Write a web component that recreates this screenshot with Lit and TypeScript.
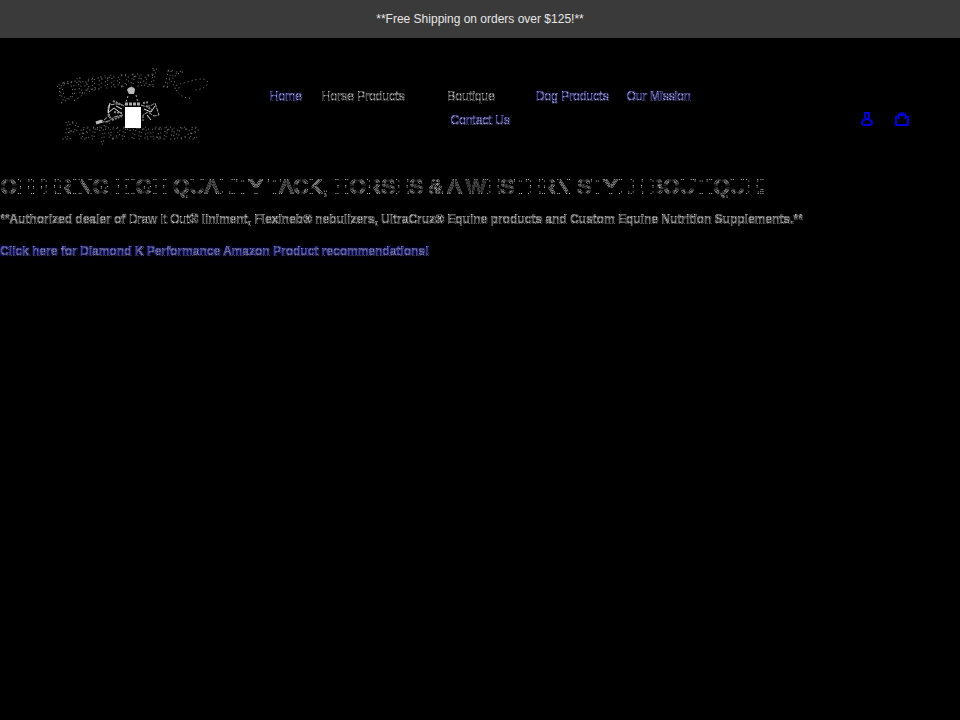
import { LitElement, html, css } from "lit";
import { customElement } from "lit/decorators.js";

interface NavItem {
  label: string;
  href?: string;
}

const NAV: NavItem[] = [
  { label: "Home", href: "#home" },
  { label: "Horse Products" },
  { label: "Boutique" },
  { label: "Dog Products", href: "#dog-products" },
  { label: "Our Mission", href: "#our-mission" },
  { label: "Contact Us", href: "#contact" },
];

@customElement("app-root")
export class AppRoot extends LitElement {
  static styles = css`
    :host {
      display: block;
      min-height: 100vh;
      background: #000;
      color: #aaa;
      font: 12px/18px "Liberation Sans", Arial, sans-serif;
    }
    * { box-sizing: border-box; }
    .defs { position: absolute; width: 0; height: 0; }
    .bar {
      background: #3a3a3a;
      color: #e6e6e6;
      text-align: center;
      padding: 10px 16px;
      margin: 0;
      line-height: 18px;
    }
    .header {
      display: grid;
      grid-template-columns: 5fr 12fr 5fr;
      align-items: center;
      padding: 24px 50px 20px;
    }
    .logo { display: block; width: 164px; height: 92px; filter: grayscale(1); }
    .script {
      font-family: "Liberation Serif", serif;
      font-style: italic;
      fill: none;
      stroke: #777;
      stroke-width: 1;
      stroke-dasharray: 1 3;
    }
    .nav ul {
      display: flex;
      flex-wrap: wrap;
      justify-content: center;
      list-style: none;
      margin: 0;
      padding: 0;
    }
    .nav a, .nav button {
      display: block;
      font: inherit;
      line-height: 24px;
      padding: 0 9px;
      border: 0;
      background: #000;
      color: #aaa;
      text-decoration: none;
      filter: url(#ghost);
    }
    .nav button { padding: 0 32px 0 11px; }
    .nav a { color: #99e; text-shadow: 0 0 2px #00f; }
    .tools { display: flex; justify-content: flex-end; gap: 19px; padding-top: 22px; }
    .tools a { display: block; color: #00d; }
    .tools svg { display: block; width: 16px; height: 18px; }
    h1 {
      margin: 0;
      font-size: 21px;
      line-height: 24px;
      font-weight: 400;
      background: #000;
      color: #eee;
      filter: url(#edge);
    }
    .copy { margin: 14px 0 0; font-weight: 700; }
    .first { margin-top: 12px; }
    .copy i { font-style: normal; font-weight: 400; }
    .copy span, .copy a { background: #000; color: #bbb; filter: url(#ghost); }
    .copy a { color: #88e; text-decoration: none; text-shadow: 0 0 2px #00f, 0 0 2px #00f; }
  `;

  render() {
    return html`
      <svg class="defs" aria-hidden="true">
        <filter id="edge" x="0" y="0" width="1" height="1" color-interpolation-filters="sRGB">
          <feConvolveMatrix in="SourceGraphic" order="2" kernelMatrix="1 -1 -1 1" divisor="1" preserveAlpha="true" result="a" />
          <feConvolveMatrix in="SourceGraphic" order="2" kernelMatrix="-1 1 1 -1" divisor="1" preserveAlpha="true" result="b" />
          <feComposite in="a" in2="b" operator="arithmetic" k1="0" k2="0.8" k3="0.8" k4="0" />
        </filter>
        <filter id="ghost" x="0" y="0" width="1" height="1" color-interpolation-filters="sRGB">
          <feConvolveMatrix in="SourceGraphic" order="2" kernelMatrix="1 -1 -1 1" divisor="1" preserveAlpha="true" result="a" />
          <feConvolveMatrix in="SourceGraphic" order="2" kernelMatrix="-1 1 1 -1" divisor="1" preserveAlpha="true" result="b" />
          <feComposite in="a" in2="b" operator="arithmetic" k1="0" k2="0.6" k3="0.6" k4="0" result="c" />
          <feComposite in="c" in2="SourceGraphic" operator="arithmetic" k1="0" k2="1" k3="0.5" k4="0" />
        </filter>
      </svg>
      <p class="bar">**Free Shipping on orders over $125!**</p>
      <header class="header">
        <a href="#home" aria-label="Diamond K Performance">
          <svg class="logo" viewBox="50 62 164 92" fill="none">
            <path id="arch" d="M62 103C90 85 140 80 212 94" />
            <text class="script" font-size="26"><textPath href="#arch">Diamond K</textPath></text>
            <g stroke="#888" stroke-dasharray="1 3">
              <path d="M60 96c-4-10 12-18 24-14s-2 14-12 20" />
              <path d="M180 84c8-2 24-8 27-3s-6 9-13 9M176 90c4 6 10 9 16 8" />
            </g>
            <text class="script" x="63" y="139" font-size="26">Performance</text>
            <path d="M125 107h16v21h-16z" fill="#fff" />
            <path d="M127 90c1-4 8-4 8 0l-1 4h-5z" fill="#bbb" />
            <g stroke="#aaa">
              <path d="M128 96l-3 9M136 95l2 8" stroke-dasharray="2 2" />
              <path d="M125 104h16" stroke-width="3" stroke-dasharray="3 1" />
              <path d="M124 106c-4-3-9-2-15-1-2 4-1 8 1 10l-6 5-8 3M123 115l-9 2-5 4-12 2M141 105c5 2 9 2 14-2l4 12-5 1-6-4-5 3v6" stroke-dasharray="4 1" />
              <path d="M110 103l-2 10 6-5 8 6M116 106l6 3M144 109l7 3 4-6M147 115l4 5" stroke="#ddd" />
              <path d="M96 123l6-2" stroke="#bbb" stroke-width="3" />
              <path d="M112 120l10-4M113 101l9 4M143 103l6-1M108 114l3 5M114 112l8 1M146 106l6 4" stroke="#888" stroke-width="2" stroke-dasharray="2 1" />
            </g>
          </svg>
        </a>
        <nav class="nav" aria-label="Main">
          <ul>
            ${NAV.map((n) => html`<li>${n.href ? html`<a href=${n.href}>${n.label}</a>` : html`<button type="button" aria-haspopup="true">${n.label}</button>`}</li>`)}
          </ul>
        </nav>
        <div class="tools">
          <a href="#account" aria-label="Log in"><svg viewBox="0 0 16 18" fill="none" stroke="currentColor" stroke-width="2"><path d="M6 3h4v4l-1 2H7L6 7zM7 9c-3 1-4 2-4 4 0 2 2 2 5 2s5 0 5-2-1-3-4-4" /></svg></a>
          <a href="#cart" aria-label="Cart"><svg viewBox="0 0 16 18" fill="none" stroke="currentColor" stroke-width="2"><path d="M2 15V7h2c1-5 7-5 8 0h2v8zM4 7l1 2M12 7l-1 2M6 5h4" /></svg></a>
        </div>
      </header>
      <main>
        <h1>OFFERING HIGH QUALITY TACK, HORSES &amp; A WESTERN STYLE BOUTIQUE!</h1>
        <p class="copy first"><span>**Authorized dealer of <i>Draw It Out®</i> liniment, Flexineb® nebulizers, UltraCruz® Equine products and Custom Equine Nutrition Supplements.**</span></p>
        <p class="copy"><a href="#recommendations">Click here for Diamond K Performance Amazon Product recommendations!</a></p>
      </main>
    `;
  }
}
